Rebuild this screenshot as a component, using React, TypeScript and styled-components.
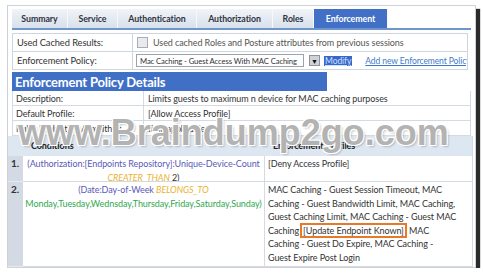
import React from "react";
import styled, { createGlobalStyle } from "styled-components";

const GlobalStyle = createGlobalStyle`
  html, body {
    margin: 0;
    padding: 0;
    background: #fff;
  }
  body {
    font-family: Lato, "Liberation Sans", sans-serif;
    font-size: 9px;
    letter-spacing: -0.08px;
    color: #333;
  }
`;

const Frame = styled.div`
  position: relative;
  margin: 5px 0 0 7px;
  width: 467px;
  height: 261px;
  border: 1px solid #cfd3d8;
  background: #fff;
  box-shadow: 4px 4px 1px #2b2b2b;
  display: flex;
  flex-direction: column;
  overflow: hidden;
`;

const TopSection = styled.div`
  padding: 0 4px;
  display: flex;
  flex-direction: column;
`;

const TabBar = styled.div`
  display: flex;
  margin-top: 3px;
  height: 19px;
  border-bottom: 2px solid #7094cc;
`;

const Tab = styled.div<{ $w: number; $active?: boolean }>`
  width: ${(p) => p.$w}px;
  display: flex;
  align-items: center;
  justify-content: center;
  font-weight: 700;
  font-size: 8.8px;
  color: ${(p) => (p.$active ? "#fff" : "#2f3440")};
  background: ${(p) =>
    p.$active ? "#4270c6" : "linear-gradient(#f1f4f8, #d7e0eb)"};
  border-right: 1px solid #f6f8fb;
  box-sizing: border-box;
`;

const FormBox = styled.div`
  margin: 3px 3px 0 0;
  border: 1px solid #cdd5df;
  display: grid;
  grid-template-columns: 120px 1fr;
`;

const FormLabel = styled.div<{ $last?: boolean }>`
  height: 17px;
  display: flex;
  align-items: center;
  padding-left: 4px;
  border-right: 1px solid #cdd5df;
  border-bottom: ${(p) => (p.$last ? "none" : "1px solid #cdd5df")};
  font-size: 9.3px;
`;

const FormValue = styled.div<{ $last?: boolean }>`
  height: 17px;
  display: flex;
  align-items: center;
  gap: 3px;
  padding-left: 4px;
  border-bottom: ${(p) => (p.$last ? "none" : "1px solid #cdd5df")};
  overflow: hidden;
  white-space: nowrap;
`;

const CheckBox = styled.span`
  width: 9px;
  height: 9px;
  flex: none;
  border: 1px solid #a9adb3;
  background: #e9eaec;
  margin-right: 2px;
`;

const Muted = styled.span`
  color: #555;
`;

const SelectBox = styled.div`
  display: flex;
  align-items: center;
  flex: none;
  height: 13px;
  width: 168px;
  border: 1px solid #9da3ab;
  padding-left: 3px;
  font-size: 7.7px;
  letter-spacing: -0.12px;
  box-sizing: border-box;
  margin-left: -1px;
  overflow: hidden;
`;

const ArrowButton = styled.span`
  width: 11px;
  height: 11px;
  flex: none;
  margin-left: 2px;
  background: #cfd2d6;
  border: 1px solid #8f949a;
  display: flex;
  align-items: center;
  justify-content: center;
  font-size: 7px;
  color: #111;
  box-sizing: border-box;
`;

const Highlight = styled.span`
  background: #3867c9;
  color: #cfe0ff;
  text-decoration: underline;
  font-size: 8.5px;
  padding: 0 1px;
  margin-left: 1px;
`;

const Link = styled.span`
  color: #3d7cc9;
  text-decoration: underline;
  font-size: 8.5px;
  margin-left: 10px;
`;

const DetailsHeader = styled.div`
  margin-top: 2px;
  width: 315px;
  height: 19px;
  background: #3f70c6;
  color: #fff;
  font-weight: 700;
  font-size: 13px;
  letter-spacing: -0.2px;
  display: flex;
  align-items: center;
  padding-left: 3px;
  box-sizing: border-box;
`;

const DetailsGrid = styled.div`
  display: grid;
  grid-template-columns: 131px 1fr;
  grid-auto-rows: 15px;
  border-left: 1px solid #d3dae3;
  border-right: 1px solid #d3dae3;
`;

const DetailCell = styled.div<{ $label?: boolean }>`
  display: flex;
  align-items: center;
  padding-left: ${(p) => (p.$label ? 3 : 4)}px;
  border-bottom: 1px solid #d3dae3;
  border-right: ${(p) => (p.$label ? "1px solid #d3dae3" : "none")};
  white-space: nowrap;
  overflow: hidden;
`;

const RuleTable = styled.div`
  flex: 1;
  margin-right: 2px;
  display: grid;
  grid-template-columns: 15px 242px 1fr;
  grid-template-rows: 20px 26px 1fr;
  border-right: 1px solid #d3dae3;
  line-height: 13.5px;
`;

const HeadCell = styled.div`
  background: #dde7f2;
  font-weight: 700;
  display: flex;
  align-items: center;
  padding-left: 8px;
  color: #222;
`;

const NumCell = styled.div`
  background: #d4dae3;
  font-weight: 700;
  font-size: 10px;
  color: #333;
  padding: 1px 0 0 3px;
  border-bottom: 1px solid #e6eaf0;
`;

const CondCell = styled.div`
  text-align: center;
  padding-top: 1px;
  border-right: 1px solid #d3dae3;
  border-bottom: 1px solid #d3dae3;
  white-space: nowrap;
  overflow: hidden;
`;

const ProfileCell = styled.div`
  padding: 1px 0 0 3px;
  border-bottom: 1px solid #d3dae3;
  white-space: nowrap;
`;

const Attr = styled.span`
  color: #5a5ab8;
`;

const Op = styled.span`
  color: #eab431;
  font-style: italic;
`;

const Days = styled.span`
  color: #2fa84f;
`;

const Boxed = styled.span`
  border: 2px solid #e8782a;
  padding: 0 1px;
  margin-left: 1px;
`;

const Watermark = styled.div`
  position: absolute;
  left: 10px;
  top: 109px;
  font-family: "Liberation Sans", Arial, sans-serif;
  font-weight: 700;
  font-size: 36px;
  line-height: 36px;
  letter-spacing: 0;
  white-space: nowrap;
  color: rgba(165, 165, 165, 0.85);
  text-shadow: 1px 1px 0 #fff, -1px -1px 0 #fff, 1px -1px 0 #fff,
    -1px 1px 0 #fff, 2px 2px 2px rgba(0, 0, 0, 0.2);
  pointer-events: none;
`;

const tabs = [
  { label: "Summary", w: 56 },
  { label: "Service", w: 50 },
  { label: "Authentication", w: 79 },
  { label: "Authorization", w: 76 },
  { label: "Roles", w: 41 },
  { label: "Enforcement", w: 74, active: true },
];

const details = [
  ["Description:", "Limits guests to maximum n device for MAC caching purposes"],
  ["Default Profile:", "[Allow Access Profile]"],
  ["Rules Evaluation Algorithm:", "first-applicable"],
];

const App: React.FC = () => {
  return (
    <>
      <GlobalStyle />
      <Frame>
        <TopSection>
          <TabBar>
            {tabs.map((t) => (
              <Tab key={t.label} $w={t.w} $active={t.active}>
                {t.label}
              </Tab>
            ))}
          </TabBar>

          <FormBox>
            <FormLabel>Used Cached Results:</FormLabel>
            <FormValue>
              <CheckBox />
              <Muted>Used cached Roles and Posture attributes from previous sessions</Muted>
            </FormValue>
            <FormLabel $last>Enforcement Policy:</FormLabel>
            <FormValue $last>
              <SelectBox>Mac Caching - Guest Access With MAC Caching</SelectBox>
              <ArrowButton>▼</ArrowButton>
              <Highlight>Modify</Highlight>
              <Link>Add new Enforcement Policy</Link>
            </FormValue>
          </FormBox>

          <DetailsHeader>Enforcement Policy Details</DetailsHeader>
          <DetailsGrid>
            {details.map(([label, value]) => (
              <React.Fragment key={label}>
                <DetailCell $label>{label}</DetailCell>
                <DetailCell>{value}</DetailCell>
              </React.Fragment>
            ))}
          </DetailsGrid>
        </TopSection>

        <RuleTable>
          <HeadCell />
          <HeadCell>Conditions</HeadCell>
          <HeadCell>Enforcement Profiles</HeadCell>

          <NumCell>1.</NumCell>
          <CondCell>
            <Attr>(Authorization:[Endpoints Repository]:Unique-Device-Count</Attr>
            <br />
            <Op>CREATER_THAN</Op> 2)
          </CondCell>
          <ProfileCell>[Deny Access Profile]</ProfileCell>

          <NumCell>2.</NumCell>
          <CondCell>
            <Attr>(Date:Day-of-Week </Attr>
            <Op>BELONGS_TO</Op>
            <br />
            <Days>Monday,Tuesday,Wednsday,Thursday,Friday,Saturday,Sunday)</Days>
          </CondCell>
          <ProfileCell>
            MAC Caching - Guest Session Timeout, MAC
            <br />
            Caching - Guest Bandwidth Limit, MAC Caching,
            <br />
            Guest Caching Limit, MAC Caching - Guest MAC
            <br />
            Caching<Boxed>[Update Endpoint Known]</Boxed> MAC
            <br />
            Caching - Guest Do Expire, MAC Caching -
            <br />
            Guest Expire Post Login
          </ProfileCell>
        </RuleTable>

        <Watermark>www.Braindump2go.com</Watermark>
      </Frame>
    </>
  );
};

export default App;
